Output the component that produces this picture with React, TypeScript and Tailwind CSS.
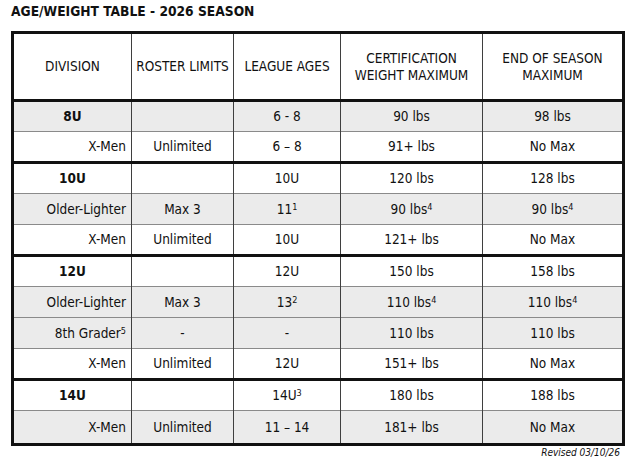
import type { ReactNode } from 'react';

type Row = {
  division: ReactNode;
  group?: boolean;
  roster: ReactNode;
  ages: ReactNode;
  cert: ReactNode;
  end: ReactNode;
  gray?: boolean;
  thick?: boolean;
  tall?: boolean;
};

const Sup = ({ children }: { children: ReactNode }) => (
  <span className="text-[9px] leading-none align-[4px]">{children}</span>
);

const rows: Row[] = [
  { division: '8U', group: true, roster: '', ages: '6 - 8', cert: '90 lbs', end: '98 lbs', gray: true, thick: true },
  { division: 'X-Men', roster: 'Unlimited', ages: '6 – 8', cert: '91+ lbs', end: 'No Max' },
  { division: '10U', group: true, roster: '', ages: '10U', cert: '120 lbs', end: '128 lbs', thick: true },
  {
    division: 'Older-Lighter',
    roster: 'Max 3',
    ages: <>11<Sup>1</Sup></>,
    cert: <>90 lbs<Sup>4</Sup></>,
    end: <>90 lbs<Sup>4</Sup></>,
    gray: true,
  },
  { division: 'X-Men', roster: 'Unlimited', ages: '10U', cert: '121+ lbs', end: 'No Max' },
  { division: '12U', group: true, roster: '', ages: '12U', cert: '150 lbs', end: '158 lbs', thick: true },
  {
    division: 'Older-Lighter',
    roster: 'Max 3',
    ages: <>13<Sup>2</Sup></>,
    cert: <>110 lbs<Sup>4</Sup></>,
    end: <>110 lbs<Sup>4</Sup></>,
    gray: true,
  },
  { division: <>8th Grader<Sup>5</Sup></>, roster: '-', ages: '-', cert: '110 lbs', end: '110 lbs', gray: true },
  { division: 'X-Men', roster: 'Unlimited', ages: '12U', cert: '151+ lbs', end: 'No Max' },
  { division: '14U', group: true, roster: '', ages: <>14U<Sup>3</Sup></>, cert: '180 lbs', end: '188 lbs', thick: true },
  { division: 'X-Men', roster: 'Unlimited', ages: '11 – 14', cert: '181+ lbs', end: 'No Max', gray: true, tall: true },
];

export default function App() {
  return (
    <div
      className="w-[631px] h-[458px] bg-white text-[#111] overflow-hidden"
      style={{ fontFamily: '"DejaVu Sans Condensed", "DejaVu Sans", sans-serif' }}
    >
      <h1 className="pl-[11px] pt-[3px] h-[31px] text-[13.7px] font-bold leading-[17px]">
        AGE/WEIGHT TABLE - 2026 SEASON
      </h1>
      <table className="ml-[11px] w-[611px] table-fixed border-collapse border-[3px] border-[#111] text-[13.5px]">
        <colgroup>
          <col className="w-[119px]" />
          <col className="w-[102px]" />
          <col className="w-[107px]" />
          <col className="w-[142px]" />
          <col className="w-[141px]" />
        </colgroup>
        <thead>
          <tr className="h-[68px] border-b-[3px] border-[#111] text-center leading-[17px]">
            <th className="font-normal border-r border-[#3f3f3f]">DIVISION</th>
            <th className="font-normal border-r border-[#3f3f3f] whitespace-nowrap">ROSTER LIMITS</th>
            <th className="font-normal border-r border-[#3f3f3f]">LEAGUE AGES</th>
            <th className="font-normal border-r border-[#3f3f3f]">
              CERTIFICATION
              <br />
              WEIGHT MAXIMUM
            </th>
            <th className="font-normal">
              END OF SEASON
              <br />
              MAXIMUM
            </th>
          </tr>
        </thead>
        <tbody>
          {rows.map((r, i) => (
            <tr
              key={i}
              className={`${r.tall ? 'h-[34px]' : 'h-[31px]'} ${r.gray ? 'bg-[#ebebeb]' : 'bg-white'} ${
                r.thick ? 'border-t-[3px] border-t-[#111]' : 'border-t border-t-[#8a8a8a]'
              }`}
            >
              <td
                className={`border-r border-[#3f3f3f] ${
                  r.group ? 'text-center font-bold' : 'text-right pr-[5px]'
                }`}
              >
                {r.division}
              </td>
              <td className="border-r border-[#3f3f3f] text-center">{r.roster}</td>
              <td className="border-r border-[#3f3f3f] text-center">{r.ages}</td>
              <td className="border-r border-[#3f3f3f] text-center">{r.cert}</td>
              <td className="text-center">{r.end}</td>
            </tr>
          ))}
        </tbody>
      </table>
      <div className="w-[620px] text-right text-[10px] italic leading-[10px] pt-[2px]">Revised 03/10/26</div>
    </div>
  );
}
